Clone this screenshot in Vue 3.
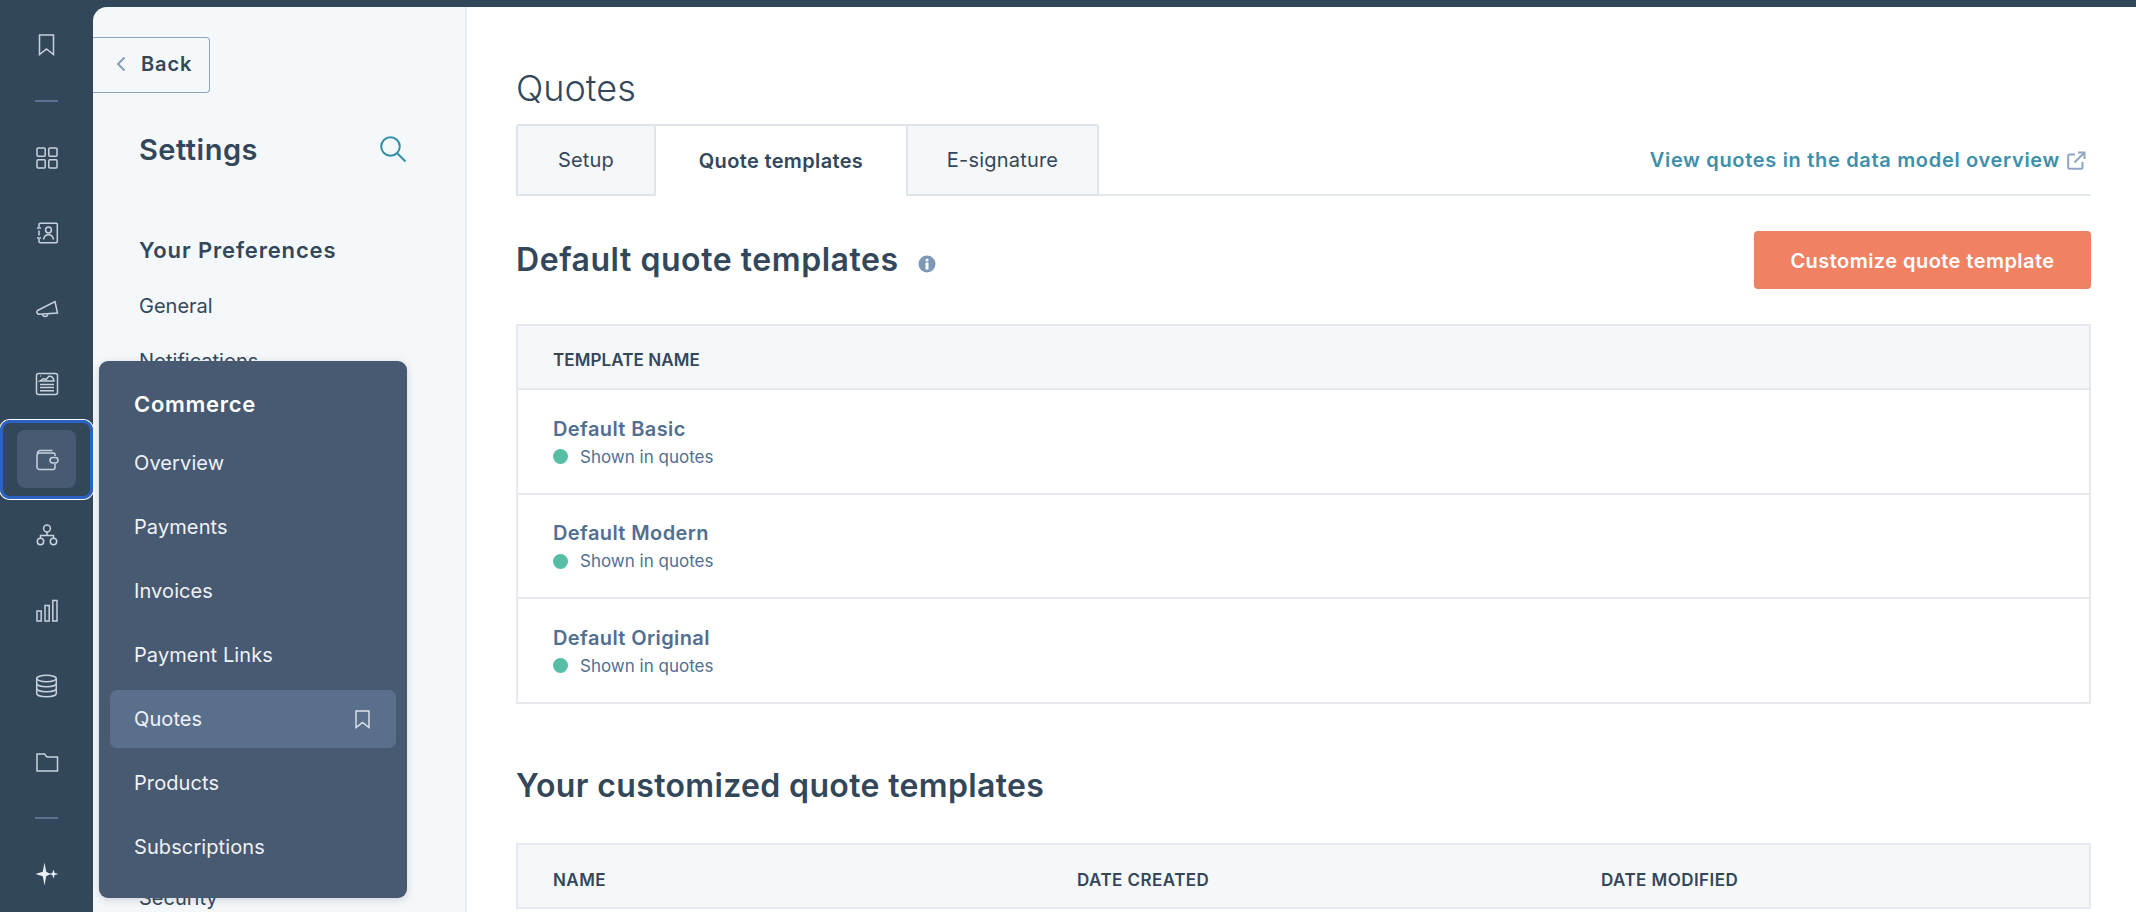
<script setup>
const railItems = ['grid', 'contacts', 'megaphone', 'report', 'wallet', 'org', 'bars', 'db', 'folder'];

const commerceLinks = ['Overview', 'Payments', 'Invoices', 'Payment Links', 'Quotes', 'Products', 'Subscriptions'];

const defaultTemplates = ['Default Basic', 'Default Modern', 'Default Original'];
</script>

<template>
  <div class="page">
    <nav class="rail">
      <div class="rail_top">
        <svg class="rail_icon" width="17" height="22" viewBox="0 0 17 22">
          <path d="M1.5 1h14v19.5l-7-5.6-7 5.6z" />
        </svg>
      </div>
      <div class="rail_divider"></div>
      <div v-for="item in railItems" :key="item" class="rail_item" :class="{ rail_item_active: item === 'wallet' }">
        <span v-if="item === 'wallet'" class="rail_box"></span>
        <svg class="rail_icon" width="24" height="24" viewBox="0 0 24 24">
          <template v-if="item === 'grid'">
            <rect x="2" y="2" width="8.2" height="8.2" rx="1" />
            <rect x="13.8" y="2" width="8.2" height="8.2" rx="1" />
            <rect x="2" y="13.8" width="8.2" height="8.2" rx="1" />
            <rect x="13.8" y="13.8" width="8.2" height="8.2" rx="1" />
          </template>
          <template v-if="item === 'contacts'">
            <path d="M4 6V3.5A1.3 1.3 0 0 1 5.3 2.2h16a1 1 0 0 1 1 1v17.6a1 1 0 0 1-1 1h-16A1.3 1.3 0 0 1 4 20.5V18" />
            <path d="M4 9.5v5" />
            <path d="M2 7h4M2 17h4" />
            <circle cx="13.5" cy="9" r="2.9" />
            <path d="M8.5 18.5c.6-3.2 2.6-4.7 5-4.7s4.400 1.500 5 4.700" />
          </template>
          <template v-if="item === 'megaphone'">
            <path d="M2.500 13.500 20 4.500l2.500 11.500-18 1.200a2.200 2.200 0 0 1-2-3.700z" />
            <path d="M7.500 17.300a2.700 2.700 0 0 0 5.300 0" />
          </template>
          <template v-if="item === 'report'">
            <rect x="1.500" y="1.500" width="21" height="21" rx="2" />
            <path d="M5 4h.8" />
            <path d="M5 9l3.500-2.500 2.500 1 3-3.200c2.500-.5 4.500 1 5 4.700z" />
            <path d="M5 12.500h14M5 15.500h14M5 18.800h14" />
          </template>
          <template v-if="item === 'wallet'">
            <path d="M20 8V6.500A1.500 1.500 0 0 0 18.500 5H4.500A2.500 2.500 0 0 0 2 7.500V19a2.500 2.500 0 0 0 2.500 2.500h13.500A2 2 0 0 0 20 19.500V16" />
            <path d="M2.500 6A3 3 0 0 1 5 2.500h12.500" />
            <rect x="15" y="9.500" width="8" height="5.500" rx="2.700" />
          </template>
          <template v-if="item === 'org'">
            <circle cx="12" cy="5.500" r="3.400" />
            <circle cx="5.500" cy="18.500" r="3.200" />
            <circle cx="18.500" cy="18.500" r="3.200" />
            <path d="M12 9v3.500M5.500 15.300v-2.800h13v2.800" />
          </template>
          <template v-if="item === 'bars'">
            <rect x="2" y="12" width="4.200" height="10" />
            <rect x="10" y="6.500" width="4.200" height="15.500" />
            <rect x="17.800" y="1.500" width="4.200" height="20.500" />
          </template>
          <template v-if="item === 'db'">
            <ellipse cx="11.500" cy="4.500" rx="9.800" ry="3.200" />
            <path d="M1.700 4.500v15c0 1.800 4.400 3.200 9.800 3.200s9.800-1.400 9.800-3.200v-15" />
            <path d="M1.700 9.500c0 1.800 4.400 3.200 9.800 3.200s9.800-1.400 9.800-3.200" />
            <path d="M1.700 14.500c0 1.800 4.400 3.200 9.800 3.200s9.800-1.400 9.800-3.200" />
          </template>
          <template v-if="item === 'folder'">
            <path d="M2 21V4h7.500l2.500 3h10.500v14z" />
          </template>
        </svg>
      </div>
      <div class="rail_divider rail_divider_low"></div>
      <div class="rail_item">
        <svg width="24" height="24" viewBox="0 0 24 24">
          <path class="spark" d="M9.500 0.500 11.200 9.800 15.500 12l-4.300 2.200L9.500 23.500 7.800 14.200 0.500 12l7.300-2.200z" />
          <path class="spark" d="M18.500 7.500 19.600 11 23.500 12l-3.900 1-1.100 3.500-1.100-3.500-3.400-1 3.400-1z" />
        </svg>
      </div>
    </nav>

    <aside class="sidebar">
      <button class="back_btn">
        <svg width="10" height="16" viewBox="0 0 10 16"><path d="M8.500 1.500 2 8l6.500 6.500" /></svg>
        <span>Back</span>
      </button>
      <div class="sidebar_header">
        <h2 class="sidebar_title">Settings</h2>
        <svg class="search_icon" width="28" height="28" viewBox="0 0 28 28">
          <circle cx="11.500" cy="11.500" r="9.300" />
          <path d="M18.500 18.500l8 8" />
        </svg>
      </div>
      <h3 class="sidebar_section">Your Preferences</h3>
      <a class="sidebar_link">General</a>
      <a class="sidebar_link">Notifications</a>
      <a class="sidebar_link sidebar_link_low">Security</a>
    </aside>

    <main class="content">
      <h1 class="page_title">Quotes</h1>
      <div class="tabs_row">
        <div class="tab tab_setup">Setup</div>
        <div class="tab tab_active">Quote templates</div>
        <div class="tab tab_sign">E-signature</div>
        <a class="model_link">
          View quotes in the data model overview
          <svg width="19" height="19" viewBox="0 0 19 19">
            <path d="M8 3.500H2.500a1.300 1.300 0 0 0-1.300 1.300v11.700a1.300 1.300 0 0 0 1.300 1.300h11.700a1.300 1.300 0 0 0 1.300-1.300V11" />
            <path d="M7.500 11.500 17 2M11 1.500h6.500V8" />
          </svg>
        </a>
      </div>

      <div class="heading_row">
        <h2 class="heading">Default quote templates</h2>
        <svg class="info_icon" width="18" height="18" viewBox="0 0 18 18">
          <circle cx="9" cy="9" r="8.500" fill="#7c98b6" />
          <circle cx="9" cy="5" r="1.500" fill="#fff" />
          <rect x="7.500" y="7.500" width="3" height="7" rx=".6" fill="#fff" />
        </svg>
        <button class="primary_btn">Customize quote template</button>
      </div>

      <section class="table">
        <div class="table_head">Template name</div>
        <div v-for="template in defaultTemplates" :key="template" class="table_row">
          <a class="template_name">{{ template }}</a>
          <div class="status"><span class="status_dot"></span>Shown in quotes</div>
        </div>
      </section>

      <h2 class="heading heading_second">Your customized quote templates</h2>

      <section class="table">
        <div class="table_head table_head_cols">
          <span>Name</span>
          <span>Date created</span>
          <span>Date modified</span>
        </div>
      </section>
    </main>

    <div class="menu">
      <div class="menu_title">Commerce</div>
      <div class="menu_list">
        <a v-for="link in commerceLinks" :key="link" class="menu_link" :class="{ menu_link_active: link === 'Quotes' }">
          {{ link }}
          <svg v-if="link === 'Quotes'" width="15" height="19" viewBox="0 0 15 19">
            <path d="M1 1h13v16.500l-6.500-5-6.500 5z" />
          </svg>
        </a>
      </div>
    </div>
  </div>
</template>

<style>
html, body {
  margin: 0;
  overflow: hidden;
  background: #33475b;
}
</style>

<style scoped>
.page {
  position: relative;
  display: flex;
  width: 2136px;
  height: 912px;
  box-sizing: border-box;
  padding-top: 7px;
  overflow: hidden;
  background: #33475b;
  color: #33475b;
  font-family: Inter, "Noto Sans", sans-serif;
}

h1, h2, h3 {
  margin: 0;
}

/* left rail */
.rail {
  flex: 0 0 93px;
  display: flex;
  flex-direction: column;
  align-items: stretch;
  overflow: hidden;
}
.rail_top {
  height: 76px;
  display: flex;
  align-items: center;
  justify-content: center;
}
.rail_divider {
  flex: none;
  height: 2px;
  width: 23px;
  margin: 17px auto 18.250px;
  background: #5a7191;
}
.rail_divider_low {
  margin: 17px auto 18px;
}
.rail_item {
  flex: none;
  position: relative;
  height: 75.500px;
  display: flex;
  align-items: center;
  justify-content: center;
}
.rail_item_active::before {
  content: "";
  position: absolute;
  left: 0;
  right: 0;
  top: -2px;
  bottom: -1px;
  border: 3px solid #2a62c6;
  border-radius: 10px;
  box-shadow: 0 0 0 1px #fff;
}
.rail_box {
  position: absolute;
  left: 17px;
  top: 8px;
  width: 59px;
  height: 58px;
  border-radius: 8px;
  background: #475a72;
}
.rail_icon {
  position: relative;
  fill: none;
  stroke: #c9d2dc;
  stroke-width: 1.500;
}
.spark {
  fill: #eaf0f6;
}

/* settings sidebar */
.sidebar {
  flex: 0 0 374px;
  box-sizing: border-box;
  height: 905px;
  padding-top: 30px;
  overflow: hidden;
  background: #f5f8fa;
  border-right: 2px solid #e9edf2;
  border-top-left-radius: 14px;
}
.back_btn {
  display: flex;
  align-items: center;
  gap: 15px;
  width: 117px;
  height: 56px;
  box-sizing: border-box;
  padding: 0 0 2px 23px;
  background: transparent;
  border: 1.500px solid #8fa6c4;
  border-left: none;
  border-radius: 0 4px 4px 0;
  color: #33475b;
  font: 600 20px/1 Inter, sans-serif;
  letter-spacing: 0.900px;
}
.back_btn svg {
  fill: none;
  stroke: #7c98b6;
  stroke-width: 1.800;
}
.sidebar_header {
  display: flex;
  align-items: center;
  justify-content: space-between;
  height: 40px;
  margin-top: 36px;
  padding: 0 58px 0 46px;
}
.sidebar_title {
  font-size: 29px;
  font-weight: 600;
  letter-spacing: 0.500px;
}
.search_icon {
  fill: none;
  stroke: #2f8fa8;
  stroke-width: 2;
}
.sidebar_section {
  margin: 66px 0 14px 46px;
  height: 30px;
  font-size: 22px;
  line-height: 30px;
  font-weight: 600;
  letter-spacing: 0.850px;
}
.sidebar_link {
  display: block;
  height: 55px;
  padding-left: 46px;
  font-size: 20px;
  font-weight: 400;
  line-height: 55px;
}
.sidebar_link_low {
  margin-top: 482px;
}

/* main column */
.content {
  flex: 1;
  box-sizing: border-box;
  height: 905px;
  padding: 59px 45px 0 49px;
  overflow: hidden;
  background: #fff;
}
.page_title {
  height: 44px;
  font-size: 36px;
  font-weight: 300;
  line-height: 44px;
}
.tabs_row {
  display: flex;
  align-items: stretch;
  height: 70px;
  margin-top: 14px;
  border-bottom: 2px solid #e3e8ef;
}
.tab {
  display: flex;
  align-items: center;
  justify-content: center;
  box-sizing: border-box;
  height: 72px;
  background: #f6f7f9;
  border: 2px solid #dfe3eb;
  font-size: 20px;
  letter-spacing: 0.200px;
}
.tab_setup {
  width: 140px;
  border-top-left-radius: 3px;
}
.tab_active {
  width: 250px;
  background: #fff;
  border-width: 2px 0 0 0;
  border-bottom: none;
  font-weight: 600;
  letter-spacing: 0.350px;
}
.tab_sign {
  width: 193px;
  border-top-right-radius: 3px;
}
.model_link {
  display: flex;
  align-items: center;
  gap: 7px;
  margin-left: auto;
  padding: 2px 5px 0 0;
  color: #3e8fa9;
  font-size: 20px;
  font-weight: 600;
  letter-spacing: 0.680px;
}
.model_link svg {
  fill: none;
  stroke: #8fa6c4;
  stroke-width: 2;
}
.heading_row {
  display: flex;
  align-items: center;
  height: 58px;
  margin-top: 35px;
}
.heading {
  font-size: 32px;
  font-weight: 600;
  line-height: 44px;
  letter-spacing: 0.550px;
}
.info_icon {
  margin: 7px 0 0 19px;
}
.primary_btn {
  width: 337px;
  height: 58px;
  margin-left: auto;
  padding-top: 2px;
  background: #f08263;
  border: none;
  border-radius: 4px;
  color: #fff;
  font: 600 20px/1 Inter, sans-serif;
  letter-spacing: 0.450px;
}
.table {
  margin-top: 35px;
  border: 2px solid #e6eaf0;
  border-bottom-width: 2px;
}
.table_head {
  height: 62px;
  padding-left: 35px;
  background: #f6f7f9;
  font-size: 17px;
  font-weight: 600;
  line-height: 69px;
  letter-spacing: 0.100px;
  text-transform: uppercase;
}
.table_head_cols {
  display: grid;
  grid-template-columns: 524px 524px 1fr;
  line-height: 70px;
  letter-spacing: 0.450px;
}
.table_row {
  box-sizing: border-box;
  height: 104.700px;
  padding: 24.500px 0 0 35px;
  border-top: 2px solid #e6eaf0;
}
.template_name {
  display: block;
  color: #516f90;
  font-size: 20px;
  font-weight: 600;
  line-height: 28px;
  letter-spacing: 0.400px;
}
.status {
  display: flex;
  align-items: center;
  gap: 12px;
  color: #516f90;
  font-size: 17px;
  line-height: 28px;
}
.status_dot {
  width: 15px;
  height: 15px;
  border-radius: 50%;
  background: #57bda4;
}
.heading_second {
  height: 44px;
  margin-top: 60px;
  letter-spacing: 0.350px;
}
.heading_second + .table {
  margin-top: 35px;
}

/* hover menu over the sidebar */
.menu {
  position: absolute;
  left: 99px;
  top: 361px;
  width: 308px;
  height: 537px;
  box-sizing: border-box;
  padding: 28px 11px 0;
  border-radius: 9px;
  background: #475a72;
  color: #fff;
  box-shadow: 0 2px 8px rgba(51, 71, 91, 0.2);
}
.menu_title {
  height: 30px;
  padding-left: 24px;
  font-size: 22px;
  font-weight: 600;
  line-height: 30px;
  letter-spacing: 0.700px;
}
.menu_list {
  display: flex;
  flex-direction: column;
  gap: 6px;
  margin-top: 15px;
}
.menu_link {
  display: flex;
  align-items: center;
  justify-content: space-between;
  height: 58px;
  padding: 0 26px 0 24px;
  border-radius: 7px;
  color: #eef2f6;
  font-size: 20px;
  letter-spacing: 0.100px;
}
.menu_link_active {
  background: #5a6f8c;
}
.menu_link svg {
  fill: none;
  stroke: #dfe5ec;
  stroke-width: 1.400;
}
</style>
